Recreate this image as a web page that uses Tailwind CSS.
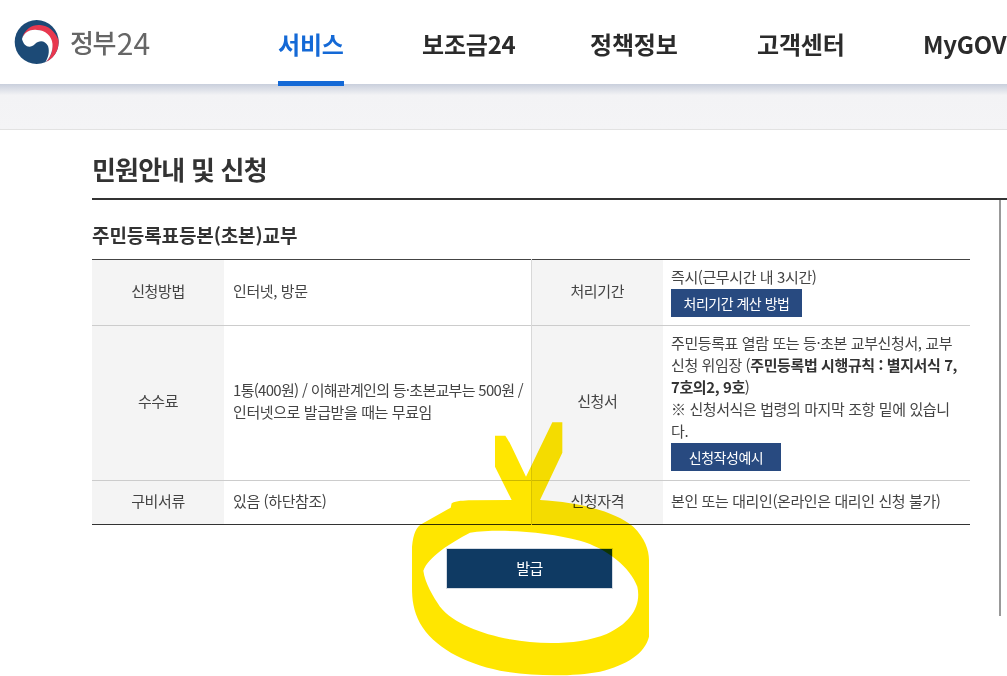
<!DOCTYPE html>
<html lang="ko">
<head>
    <meta charset="UTF-8">
    <title>민원안내 및 신청</title>
    <script src="https://cdn.jsdelivr.net/npm/@tailwindcss/browser@4"></script>
</head>
<body class="bg-white font-['Noto_Sans_CJK_KR','Noto_Sans',sans-serif] text-[#333] w-[1007px] h-[676px] overflow-hidden relative">
    <!-- Header -->
    <header class="h-[84px] bg-white flex items-start whitespace-nowrap relative z-10">
        <div class="flex items-center pl-[10px] pt-[16px] w-[278px] shrink-0">
            <svg class="w-[56px] h-[52px]" viewBox="0 0 56 52">
                <circle cx="26.7" cy="26" r="22" fill="#1c4a76"/>
                <path d="M12 22 C15 13 22 8.5 30 9 C38 9.5 45 15 48.5 24 A22 22 0 0 1 36 46 C41 41 43 34 42 28 C41 20 33 13 25 14 C19 14 14 18 12 22 Z" fill="#e8384f"/>
                <path d="M12 23 C14 16 21 13 27 14 C35 14 42 20 42.5 28 C43 35 40 42 35 47 C38 42 40 36 38 30 C35 24 29 24 25 28 C20 33 14 31 12 23 Z" fill="#fff"/>
            </svg>
            <span class="ml-[4px] text-[26px] leading-[40px] tracking-[-1.5px] font-medium text-[#666]">정부</span>
            <span class="ml-[2px] text-[30px] leading-[40px] text-[#666]">24</span>
        </div>
        <nav class="flex gap-[77px] text-[24px] font-bold tracking-[-0.2px] text-[#2b2b2b] h-[86px]">
            <a class="relative h-[86px] pt-[26px] leading-[36px] text-[#1469d6] w-[66px] mr-[1px] border-b-[5px] border-[#1469d6]">서비스</a>
            <a class="pt-[26px] leading-[36px] w-[91px]">보조금24</a>
            <a class="pt-[26px] leading-[36px] w-[90px]">정책정보</a>
            <a class="pt-[26px] leading-[36px] w-[89px]">고객센터</a>
            <a class="pt-[26px] leading-[36px]">MyGOV</a>
        </nav>
    </header>

    <!-- Gray band under the header -->
    <div class="h-[46px] border-b border-[#e2e2e2] bg-gradient-to-b from-[#c9cfdc] via-[#f3f3f5] via-[25%] to-[#f4f4f6]"></div>

    <main class="pl-[92px]">
        <h1 class="text-[26px] leading-[38px] font-bold tracking-[-0.8px] text-[#333] pt-[20px] h-[70px] border-b-2 border-[#333]">민원안내 및 신청</h1>

        <div class="border-r-2 border-[#999] mr-[6px] h-[416px] pr-[29px]">
            <h2 class="text-[19px] leading-[28px] font-bold tracking-[-0.1px] pt-[21px] h-[59px] text-[#333]">주민등록표등본(초본)교부</h2>
            <table class="w-[878px] table-fixed border-t border-b border-t-[#444] border-b-[#333] text-[15px] leading-[22px] tracking-[-0.4px] text-[#444]">
                <colgroup>
                    <col class="w-[132px]"><col class="w-[307px]"><col class="w-[132px]"><col class="w-[307px]">
                </colgroup>
                <tr class="h-[66px] border-b border-[#ccc]">
                    <th class="bg-[#f4f4f4] font-normal pb-[4px]">신청방법</th>
                    <td class="px-[9px] pb-[4px] border-r border-[#d8d8d8]">인터넷, 방문</td>
                    <th class="bg-[#f4f4f4] font-normal pb-[4px]">처리기간</th>
                    <td class="px-[8px] align-top pt-[6px]">
                        <div class="leading-[22px]">즉시(근무시간 내 3시간)</div>
                        <span class="inline-block mt-[1px] bg-[#284a80] text-white text-[14px] tracking-[-0.5px] h-[28px] leading-[28px] w-[131px] text-center">처리기간 계산 방법</span>
                    </td>
                </tr>
                <tr class="h-[155px] border-b border-[#ccc]">
                    <th class="bg-[#f4f4f4] font-normal pb-[4px]">수수료</th>
                    <td class="px-[9px] pb-[4px] border-r border-[#d8d8d8] whitespace-nowrap"><span class="tracking-[-0.7px]">1통(400원) / 이해관계인의 등·초본교부는 500원 /</span><br>인터넷으로 발급받을 때는 무료임</td>
                    <th class="bg-[#f4f4f4] font-normal pb-[4px]">신청서</th>
                    <td class="px-[8px] align-top pt-[6px]">
                        주민등록표 열람 또는 등·초본 교부신청서, 교부<br>
                        신청 위임장 (<b class="text-[#333]">주민등록법 시행규칙 : 별지서식 7,<br>7호의2, 9호</b>)<br>
                        ※ 신청서식은 법령의 마지막 조항 밑에 있습니<br>다.<br>
                        <span class="inline-block mt-[1px] bg-[#284a80] text-white text-[14px] tracking-[-0.5px] h-[28px] leading-[28px] w-[110px] text-center">신청작성예시</span>
                    </td>
                </tr>
                <tr class="h-[44px]">
                    <th class="bg-[#f4f4f4] font-normal pb-[3px]">구비서류</th>
                    <td class="px-[9px] pb-[3px] border-r border-[#d8d8d8]">있음 (하단참조)</td>
                    <th class="bg-[#f4f4f4] font-normal pb-[3px]">신청자격</th>
                    <td class="px-[8px] pb-[3px]">본인 또는 대리인(온라인은 대리인 신청 불가)</td>
                </tr>
            </table>
            <div class="pl-[354px] pt-[23px]">
                <button class="w-[167px] h-[41px] bg-[#0f3a63] border border-[#d5dbe3] text-white text-[15px] tracking-[-0.5px]">발급</button>
            </div>
        </div>
    </main>

    <!-- Yellow marker scribble drawn over the page -->
    <svg class="absolute left-[400px] top-[410px] w-[270px] h-[266px] mix-blend-multiply z-20" viewBox="0 0 810 798">
        <path fill="#ffe600" fill-rule="evenodd" d="M285 77 L316 77 Q325 90 335 110 L378 200 L457 37 L487 37 L487 128 L420 270 C520 275 640 300 700 350 C735 385 747 420 747 450 L747 680 C735 730 680 765 600 785 C520 800 400 800 300 782 C190 760 100 710 60 640 C40 600 36 570 36 530 L36 410 C40 370 50 350 65 342 L152 293 L155 280 C170 272 190 272 215 271 L335 270 L285 170 Z M70 482 C85 440 150 400 210 368 C300 355 440 365 540 392 C620 415 690 470 712 530 C725 590 690 640 620 672 C540 705 420 705 330 688 C240 670 160 640 120 590 C100 560 75 520 70 482 Z"/>
    </svg>
</body>
</html>
